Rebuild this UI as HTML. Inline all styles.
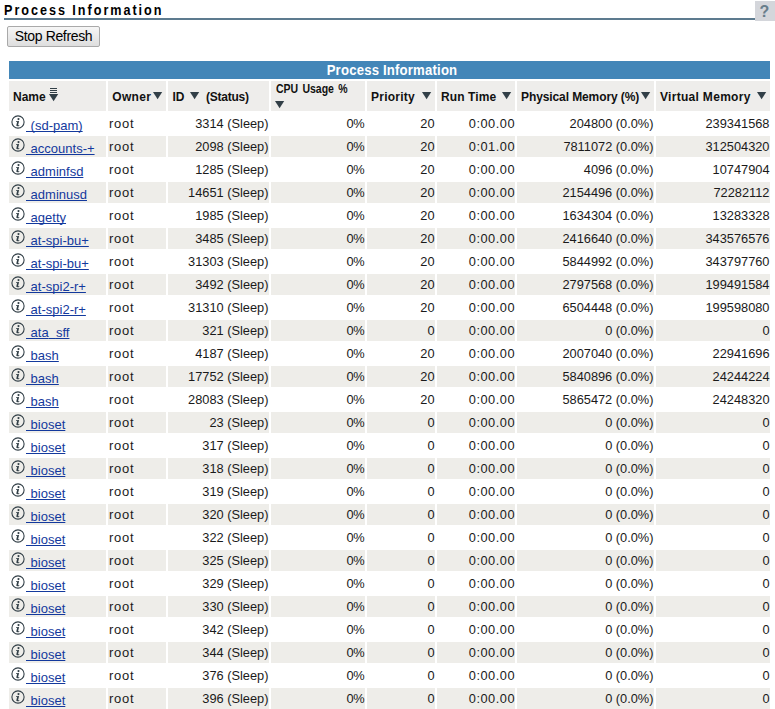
<!DOCTYPE html><html><head><meta charset="utf-8"><title>Process Information</title><style>
*{margin:0;padding:0;box-sizing:border-box}
html,body{width:775px;height:709px;overflow:hidden;background:#fff;position:relative;font-family:"Liberation Sans",sans-serif}
.a{position:absolute;white-space:nowrap}
.title{left:4px;top:0;font-size:14px;font-weight:bold;letter-spacing:2.2px;color:#000;line-height:20px;transform:scaleX(0.9);transform-origin:0 0}
.rule{left:4px;top:18px;width:751px;height:2px;background:#5d7b8f}
.help{left:755px;top:1px;width:20px;height:20px;background:#d4d6db}
.q{left:759.6px;top:1.5px;color:#687e8c;font-weight:bold;font-size:16px;line-height:20px}
.btn{left:7px;top:26px;width:93px;height:21px;border:1px solid #a9a9a9;border-radius:2px;background:linear-gradient(#f6f6f6,#dedede);font-size:14px;letter-spacing:-0.35px;line-height:18px;text-align:center;color:#000}
.cap{left:9px;top:61px;width:761px;height:18px;background:#4386b8;color:#fff;font-weight:bold;font-size:14.3px;letter-spacing:0.2px;line-height:18px;text-align:center;padding-left:5px}
.capt{transform:scaleX(0.92)}
.h{top:81px;height:30px;background:#eeedeb}
.ht{font-weight:bold;font-size:12px;color:#111;line-height:14px}
.tri{width:0;height:0;border-left:4.5px solid transparent;border-right:4.5px solid transparent;border-top:7px solid #323f47}
.r{height:21px}
.g{background:#eeede9}
.t{font-size:12.8px;color:#1a1a1a;line-height:14px}
.lk{font-size:13px;color:#13399d;line-height:14px;text-decoration:underline;text-decoration-skip-ink:none;word-spacing:1px}
</style></head><body>
<div class="a title">Process Information</div>
<div class="a rule"></div>
<div class="a help"></div><div class="a q">?</div>
<div class="a btn">Stop Refresh</div>
<div class="a cap"><div class="capt">Process Information</div></div>
<div class="a h" style="left:9px;width:97px"></div>
<div class="a h" style="left:108px;width:58px"></div>
<div class="a h" style="left:168px;width:101px"></div>
<div class="a h" style="left:271px;width:94px"></div>
<div class="a h" style="left:367px;width:68px"></div>
<div class="a h" style="left:437px;width:78px"></div>
<div class="a h" style="left:517px;width:137px"></div>
<div class="a h" style="left:656px;width:114px"></div>
<div class="a ht" style="left:13px;top:89.84px;letter-spacing:0px">Name</div>
<div class="a" style="left:50px;top:88px;width:7px;height:1px;background:#323f47"></div>
<div class="a" style="left:50px;top:90px;width:7px;height:1px;background:#323f47"></div>
<div class="a" style="left:50px;top:92px;width:7px;height:1px;background:#323f47"></div>
<svg class="a" style="left:49px;top:94px" width="10" height="8" viewBox="0 0 10 8"><polygon points="0,0 9.2,0 4.6,7.3" fill="#323f47"/></svg>
<div class="a ht" style="left:112.3px;top:89.84px;letter-spacing:0.3px">Owner</div>
<svg class="a" style="left:153px;top:92px" width="10" height="8" viewBox="0 0 10 8"><polygon points="0,0 9.2,0 4.6,7.3" fill="#323f47"/></svg>
<div class="a ht" style="left:172.5px;top:89.84px;letter-spacing:0px">ID</div>
<svg class="a" style="left:190px;top:92px" width="10" height="8" viewBox="0 0 10 8"><polygon points="0,0 9.2,0 4.6,7.3" fill="#323f47"/></svg>
<div class="a ht" style="left:206px;top:89.84px;letter-spacing:-0.25px">(Status)</div>
<div class="a ht" style="left:275.5px;top:81.84px;letter-spacing:0px;word-spacing:1.5px;transform:scaleX(0.875);transform-origin:0 0">CPU Usage %</div>
<svg class="a" style="left:275px;top:101px" width="10" height="8" viewBox="0 0 10 8"><polygon points="0,0 9.2,0 4.6,7.3" fill="#323f47"/></svg>
<div class="a ht" style="left:371px;top:89.84px;letter-spacing:0.25px">Priority</div>
<svg class="a" style="left:422px;top:92px" width="10" height="8" viewBox="0 0 10 8"><polygon points="0,0 9.2,0 4.6,7.3" fill="#323f47"/></svg>
<div class="a ht" style="left:441px;top:89.84px;letter-spacing:0.1px">Run Time</div>
<svg class="a" style="left:502px;top:92px" width="10" height="8" viewBox="0 0 10 8"><polygon points="0,0 9.2,0 4.6,7.3" fill="#323f47"/></svg>
<div class="a ht" style="left:521px;top:89.84px;letter-spacing:-0.1px">Physical Memory (%)</div>
<svg class="a" style="left:641px;top:92px" width="10" height="8" viewBox="0 0 10 8"><polygon points="0,0 9.2,0 4.6,7.3" fill="#323f47"/></svg>
<div class="a ht" style="left:660px;top:89.84px;letter-spacing:0.3px">Virtual Memory</div>
<svg class="a" style="left:757px;top:92px" width="10" height="8" viewBox="0 0 10 8"><polygon points="0,0 9.2,0 4.6,7.3" fill="#323f47"/></svg>
<div class="a r" style="left:9px;top:113px;width:97px"></div>
<div class="a r" style="left:108px;top:113px;width:58px"></div>
<div class="a r" style="left:168px;top:113px;width:101px"></div>
<div class="a r" style="left:271px;top:113px;width:94px"></div>
<div class="a r" style="left:367px;top:113px;width:68px"></div>
<div class="a r" style="left:437px;top:113px;width:78px"></div>
<div class="a r" style="left:517px;top:113px;width:137px"></div>
<div class="a r" style="left:656px;top:113px;width:114px"></div>
<svg class="a" style="left:11px;top:115px" width="14" height="14" viewBox="0 0 14 14"><circle cx="7" cy="7" r="6.1" fill="none" stroke="#323f47" stroke-width="1.1"/><circle cx="7.5" cy="4.1" r="1.05" fill="#323f47"/><path d="M5.1 6.2 L8.1 6.0 L7.1 10.0 Q7.0 10.4 7.6 10.3 L8.4 10.1 L8.1 10.9 Q7.0 11.3 5.8 11.1 Q5.1 10.9 5.4 10.0 L6.1 7.1 L5.0 7.1 Z" fill="#323f47"/></svg>
<div class="a lk" style="left:26px;top:118.67px">&nbsp;(sd-pam)</div>
<div class="a t" style="left:109px;top:116.67px;font-size:13px;letter-spacing:0.7px">root</div>
<div class="a t" style="right:506.50px;top:116.67px;letter-spacing:0px">3314 (Sleep)</div>
<div class="a t" style="right:411.10px;top:116.67px;letter-spacing:-0.6px">0%</div>
<div class="a t" style="right:340.50px;top:116.67px;letter-spacing:0px">20</div>
<div class="a t" style="right:260.00px;top:116.67px;letter-spacing:0.5px">0:00.00</div>
<div class="a t" style="right:121.50px;top:116.67px;letter-spacing:0px">204800 (0.0%)</div>
<div class="a t" style="right:5.50px;top:116.67px;letter-spacing:0px">239341568</div>
<div class="a r g" style="left:9px;top:136px;width:97px"></div>
<div class="a r g" style="left:108px;top:136px;width:58px"></div>
<div class="a r g" style="left:168px;top:136px;width:101px"></div>
<div class="a r g" style="left:271px;top:136px;width:94px"></div>
<div class="a r g" style="left:367px;top:136px;width:68px"></div>
<div class="a r g" style="left:437px;top:136px;width:78px"></div>
<div class="a r g" style="left:517px;top:136px;width:137px"></div>
<div class="a r g" style="left:656px;top:136px;width:114px"></div>
<svg class="a" style="left:11px;top:138px" width="14" height="14" viewBox="0 0 14 14"><circle cx="7" cy="7" r="6.1" fill="none" stroke="#323f47" stroke-width="1.1"/><circle cx="7.5" cy="4.1" r="1.05" fill="#323f47"/><path d="M5.1 6.2 L8.1 6.0 L7.1 10.0 Q7.0 10.4 7.6 10.3 L8.4 10.1 L8.1 10.9 Q7.0 11.3 5.8 11.1 Q5.1 10.9 5.4 10.0 L6.1 7.1 L5.0 7.1 Z" fill="#323f47"/></svg>
<div class="a lk" style="left:26px;top:141.67px">&nbsp;accounts-+</div>
<div class="a t" style="left:109px;top:139.67px;font-size:13px;letter-spacing:0.7px">root</div>
<div class="a t" style="right:506.50px;top:139.67px;letter-spacing:0px">2098 (Sleep)</div>
<div class="a t" style="right:411.10px;top:139.67px;letter-spacing:-0.6px">0%</div>
<div class="a t" style="right:340.50px;top:139.67px;letter-spacing:0px">20</div>
<div class="a t" style="right:260.00px;top:139.67px;letter-spacing:0.5px">0:01.00</div>
<div class="a t" style="right:121.50px;top:139.67px;letter-spacing:0px">7811072 (0.0%)</div>
<div class="a t" style="right:5.50px;top:139.67px;letter-spacing:0px">312504320</div>
<div class="a r" style="left:9px;top:159px;width:97px"></div>
<div class="a r" style="left:108px;top:159px;width:58px"></div>
<div class="a r" style="left:168px;top:159px;width:101px"></div>
<div class="a r" style="left:271px;top:159px;width:94px"></div>
<div class="a r" style="left:367px;top:159px;width:68px"></div>
<div class="a r" style="left:437px;top:159px;width:78px"></div>
<div class="a r" style="left:517px;top:159px;width:137px"></div>
<div class="a r" style="left:656px;top:159px;width:114px"></div>
<svg class="a" style="left:11px;top:161px" width="14" height="14" viewBox="0 0 14 14"><circle cx="7" cy="7" r="6.1" fill="none" stroke="#323f47" stroke-width="1.1"/><circle cx="7.5" cy="4.1" r="1.05" fill="#323f47"/><path d="M5.1 6.2 L8.1 6.0 L7.1 10.0 Q7.0 10.4 7.6 10.3 L8.4 10.1 L8.1 10.9 Q7.0 11.3 5.8 11.1 Q5.1 10.9 5.4 10.0 L6.1 7.1 L5.0 7.1 Z" fill="#323f47"/></svg>
<div class="a lk" style="left:26px;top:164.67px">&nbsp;adminfsd</div>
<div class="a t" style="left:109px;top:162.67px;font-size:13px;letter-spacing:0.7px">root</div>
<div class="a t" style="right:506.50px;top:162.67px;letter-spacing:0px">1285 (Sleep)</div>
<div class="a t" style="right:411.10px;top:162.67px;letter-spacing:-0.6px">0%</div>
<div class="a t" style="right:340.50px;top:162.67px;letter-spacing:0px">20</div>
<div class="a t" style="right:260.00px;top:162.67px;letter-spacing:0.5px">0:00.00</div>
<div class="a t" style="right:121.50px;top:162.67px;letter-spacing:0px">4096 (0.0%)</div>
<div class="a t" style="right:5.50px;top:162.67px;letter-spacing:0px">10747904</div>
<div class="a r g" style="left:9px;top:182px;width:97px"></div>
<div class="a r g" style="left:108px;top:182px;width:58px"></div>
<div class="a r g" style="left:168px;top:182px;width:101px"></div>
<div class="a r g" style="left:271px;top:182px;width:94px"></div>
<div class="a r g" style="left:367px;top:182px;width:68px"></div>
<div class="a r g" style="left:437px;top:182px;width:78px"></div>
<div class="a r g" style="left:517px;top:182px;width:137px"></div>
<div class="a r g" style="left:656px;top:182px;width:114px"></div>
<svg class="a" style="left:11px;top:184px" width="14" height="14" viewBox="0 0 14 14"><circle cx="7" cy="7" r="6.1" fill="none" stroke="#323f47" stroke-width="1.1"/><circle cx="7.5" cy="4.1" r="1.05" fill="#323f47"/><path d="M5.1 6.2 L8.1 6.0 L7.1 10.0 Q7.0 10.4 7.6 10.3 L8.4 10.1 L8.1 10.9 Q7.0 11.3 5.8 11.1 Q5.1 10.9 5.4 10.0 L6.1 7.1 L5.0 7.1 Z" fill="#323f47"/></svg>
<div class="a lk" style="left:26px;top:187.67px">&nbsp;adminusd</div>
<div class="a t" style="left:109px;top:185.67px;font-size:13px;letter-spacing:0.7px">root</div>
<div class="a t" style="right:506.50px;top:185.67px;letter-spacing:0px">14651 (Sleep)</div>
<div class="a t" style="right:411.10px;top:185.67px;letter-spacing:-0.6px">0%</div>
<div class="a t" style="right:340.50px;top:185.67px;letter-spacing:0px">20</div>
<div class="a t" style="right:260.00px;top:185.67px;letter-spacing:0.5px">0:00.00</div>
<div class="a t" style="right:121.50px;top:185.67px;letter-spacing:0px">2154496 (0.0%)</div>
<div class="a t" style="right:5.50px;top:185.67px;letter-spacing:0px">72282112</div>
<div class="a r" style="left:9px;top:205px;width:97px"></div>
<div class="a r" style="left:108px;top:205px;width:58px"></div>
<div class="a r" style="left:168px;top:205px;width:101px"></div>
<div class="a r" style="left:271px;top:205px;width:94px"></div>
<div class="a r" style="left:367px;top:205px;width:68px"></div>
<div class="a r" style="left:437px;top:205px;width:78px"></div>
<div class="a r" style="left:517px;top:205px;width:137px"></div>
<div class="a r" style="left:656px;top:205px;width:114px"></div>
<svg class="a" style="left:11px;top:207px" width="14" height="14" viewBox="0 0 14 14"><circle cx="7" cy="7" r="6.1" fill="none" stroke="#323f47" stroke-width="1.1"/><circle cx="7.5" cy="4.1" r="1.05" fill="#323f47"/><path d="M5.1 6.2 L8.1 6.0 L7.1 10.0 Q7.0 10.4 7.6 10.3 L8.4 10.1 L8.1 10.9 Q7.0 11.3 5.8 11.1 Q5.1 10.9 5.4 10.0 L6.1 7.1 L5.0 7.1 Z" fill="#323f47"/></svg>
<div class="a lk" style="left:26px;top:210.67px">&nbsp;agetty</div>
<div class="a t" style="left:109px;top:208.67px;font-size:13px;letter-spacing:0.7px">root</div>
<div class="a t" style="right:506.50px;top:208.67px;letter-spacing:0px">1985 (Sleep)</div>
<div class="a t" style="right:411.10px;top:208.67px;letter-spacing:-0.6px">0%</div>
<div class="a t" style="right:340.50px;top:208.67px;letter-spacing:0px">20</div>
<div class="a t" style="right:260.00px;top:208.67px;letter-spacing:0.5px">0:00.00</div>
<div class="a t" style="right:121.50px;top:208.67px;letter-spacing:0px">1634304 (0.0%)</div>
<div class="a t" style="right:5.50px;top:208.67px;letter-spacing:0px">13283328</div>
<div class="a r g" style="left:9px;top:228px;width:97px"></div>
<div class="a r g" style="left:108px;top:228px;width:58px"></div>
<div class="a r g" style="left:168px;top:228px;width:101px"></div>
<div class="a r g" style="left:271px;top:228px;width:94px"></div>
<div class="a r g" style="left:367px;top:228px;width:68px"></div>
<div class="a r g" style="left:437px;top:228px;width:78px"></div>
<div class="a r g" style="left:517px;top:228px;width:137px"></div>
<div class="a r g" style="left:656px;top:228px;width:114px"></div>
<svg class="a" style="left:11px;top:230px" width="14" height="14" viewBox="0 0 14 14"><circle cx="7" cy="7" r="6.1" fill="none" stroke="#323f47" stroke-width="1.1"/><circle cx="7.5" cy="4.1" r="1.05" fill="#323f47"/><path d="M5.1 6.2 L8.1 6.0 L7.1 10.0 Q7.0 10.4 7.6 10.3 L8.4 10.1 L8.1 10.9 Q7.0 11.3 5.8 11.1 Q5.1 10.9 5.4 10.0 L6.1 7.1 L5.0 7.1 Z" fill="#323f47"/></svg>
<div class="a lk" style="left:26px;top:233.67px">&nbsp;at-spi-bu+</div>
<div class="a t" style="left:109px;top:231.67px;font-size:13px;letter-spacing:0.7px">root</div>
<div class="a t" style="right:506.50px;top:231.67px;letter-spacing:0px">3485 (Sleep)</div>
<div class="a t" style="right:411.10px;top:231.67px;letter-spacing:-0.6px">0%</div>
<div class="a t" style="right:340.50px;top:231.67px;letter-spacing:0px">20</div>
<div class="a t" style="right:260.00px;top:231.67px;letter-spacing:0.5px">0:00.00</div>
<div class="a t" style="right:121.50px;top:231.67px;letter-spacing:0px">2416640 (0.0%)</div>
<div class="a t" style="right:5.50px;top:231.67px;letter-spacing:0px">343576576</div>
<div class="a r" style="left:9px;top:251px;width:97px"></div>
<div class="a r" style="left:108px;top:251px;width:58px"></div>
<div class="a r" style="left:168px;top:251px;width:101px"></div>
<div class="a r" style="left:271px;top:251px;width:94px"></div>
<div class="a r" style="left:367px;top:251px;width:68px"></div>
<div class="a r" style="left:437px;top:251px;width:78px"></div>
<div class="a r" style="left:517px;top:251px;width:137px"></div>
<div class="a r" style="left:656px;top:251px;width:114px"></div>
<svg class="a" style="left:11px;top:253px" width="14" height="14" viewBox="0 0 14 14"><circle cx="7" cy="7" r="6.1" fill="none" stroke="#323f47" stroke-width="1.1"/><circle cx="7.5" cy="4.1" r="1.05" fill="#323f47"/><path d="M5.1 6.2 L8.1 6.0 L7.1 10.0 Q7.0 10.4 7.6 10.3 L8.4 10.1 L8.1 10.9 Q7.0 11.3 5.8 11.1 Q5.1 10.9 5.4 10.0 L6.1 7.1 L5.0 7.1 Z" fill="#323f47"/></svg>
<div class="a lk" style="left:26px;top:256.67px">&nbsp;at-spi-bu+</div>
<div class="a t" style="left:109px;top:254.67px;font-size:13px;letter-spacing:0.7px">root</div>
<div class="a t" style="right:506.50px;top:254.67px;letter-spacing:0px">31303 (Sleep)</div>
<div class="a t" style="right:411.10px;top:254.67px;letter-spacing:-0.6px">0%</div>
<div class="a t" style="right:340.50px;top:254.67px;letter-spacing:0px">20</div>
<div class="a t" style="right:260.00px;top:254.67px;letter-spacing:0.5px">0:00.00</div>
<div class="a t" style="right:121.50px;top:254.67px;letter-spacing:0px">5844992 (0.0%)</div>
<div class="a t" style="right:5.50px;top:254.67px;letter-spacing:0px">343797760</div>
<div class="a r g" style="left:9px;top:274px;width:97px"></div>
<div class="a r g" style="left:108px;top:274px;width:58px"></div>
<div class="a r g" style="left:168px;top:274px;width:101px"></div>
<div class="a r g" style="left:271px;top:274px;width:94px"></div>
<div class="a r g" style="left:367px;top:274px;width:68px"></div>
<div class="a r g" style="left:437px;top:274px;width:78px"></div>
<div class="a r g" style="left:517px;top:274px;width:137px"></div>
<div class="a r g" style="left:656px;top:274px;width:114px"></div>
<svg class="a" style="left:11px;top:276px" width="14" height="14" viewBox="0 0 14 14"><circle cx="7" cy="7" r="6.1" fill="none" stroke="#323f47" stroke-width="1.1"/><circle cx="7.5" cy="4.1" r="1.05" fill="#323f47"/><path d="M5.1 6.2 L8.1 6.0 L7.1 10.0 Q7.0 10.4 7.6 10.3 L8.4 10.1 L8.1 10.9 Q7.0 11.3 5.8 11.1 Q5.1 10.9 5.4 10.0 L6.1 7.1 L5.0 7.1 Z" fill="#323f47"/></svg>
<div class="a lk" style="left:26px;top:279.67px">&nbsp;at-spi2-r+</div>
<div class="a t" style="left:109px;top:277.67px;font-size:13px;letter-spacing:0.7px">root</div>
<div class="a t" style="right:506.50px;top:277.67px;letter-spacing:0px">3492 (Sleep)</div>
<div class="a t" style="right:411.10px;top:277.67px;letter-spacing:-0.6px">0%</div>
<div class="a t" style="right:340.50px;top:277.67px;letter-spacing:0px">20</div>
<div class="a t" style="right:260.00px;top:277.67px;letter-spacing:0.5px">0:00.00</div>
<div class="a t" style="right:121.50px;top:277.67px;letter-spacing:0px">2797568 (0.0%)</div>
<div class="a t" style="right:5.50px;top:277.67px;letter-spacing:0px">199491584</div>
<div class="a r" style="left:9px;top:297px;width:97px"></div>
<div class="a r" style="left:108px;top:297px;width:58px"></div>
<div class="a r" style="left:168px;top:297px;width:101px"></div>
<div class="a r" style="left:271px;top:297px;width:94px"></div>
<div class="a r" style="left:367px;top:297px;width:68px"></div>
<div class="a r" style="left:437px;top:297px;width:78px"></div>
<div class="a r" style="left:517px;top:297px;width:137px"></div>
<div class="a r" style="left:656px;top:297px;width:114px"></div>
<svg class="a" style="left:11px;top:299px" width="14" height="14" viewBox="0 0 14 14"><circle cx="7" cy="7" r="6.1" fill="none" stroke="#323f47" stroke-width="1.1"/><circle cx="7.5" cy="4.1" r="1.05" fill="#323f47"/><path d="M5.1 6.2 L8.1 6.0 L7.1 10.0 Q7.0 10.4 7.6 10.3 L8.4 10.1 L8.1 10.9 Q7.0 11.3 5.8 11.1 Q5.1 10.9 5.4 10.0 L6.1 7.1 L5.0 7.1 Z" fill="#323f47"/></svg>
<div class="a lk" style="left:26px;top:302.67px">&nbsp;at-spi2-r+</div>
<div class="a t" style="left:109px;top:300.67px;font-size:13px;letter-spacing:0.7px">root</div>
<div class="a t" style="right:506.50px;top:300.67px;letter-spacing:0px">31310 (Sleep)</div>
<div class="a t" style="right:411.10px;top:300.67px;letter-spacing:-0.6px">0%</div>
<div class="a t" style="right:340.50px;top:300.67px;letter-spacing:0px">20</div>
<div class="a t" style="right:260.00px;top:300.67px;letter-spacing:0.5px">0:00.00</div>
<div class="a t" style="right:121.50px;top:300.67px;letter-spacing:0px">6504448 (0.0%)</div>
<div class="a t" style="right:5.50px;top:300.67px;letter-spacing:0px">199598080</div>
<div class="a r g" style="left:9px;top:320px;width:97px"></div>
<div class="a r g" style="left:108px;top:320px;width:58px"></div>
<div class="a r g" style="left:168px;top:320px;width:101px"></div>
<div class="a r g" style="left:271px;top:320px;width:94px"></div>
<div class="a r g" style="left:367px;top:320px;width:68px"></div>
<div class="a r g" style="left:437px;top:320px;width:78px"></div>
<div class="a r g" style="left:517px;top:320px;width:137px"></div>
<div class="a r g" style="left:656px;top:320px;width:114px"></div>
<svg class="a" style="left:11px;top:322px" width="14" height="14" viewBox="0 0 14 14"><circle cx="7" cy="7" r="6.1" fill="none" stroke="#323f47" stroke-width="1.1"/><circle cx="7.5" cy="4.1" r="1.05" fill="#323f47"/><path d="M5.1 6.2 L8.1 6.0 L7.1 10.0 Q7.0 10.4 7.6 10.3 L8.4 10.1 L8.1 10.9 Q7.0 11.3 5.8 11.1 Q5.1 10.9 5.4 10.0 L6.1 7.1 L5.0 7.1 Z" fill="#323f47"/></svg>
<div class="a lk" style="left:26px;top:325.67px">&nbsp;ata<span style=color:transparent>_</span>sff</div>
<div class="a t" style="left:109px;top:323.67px;font-size:13px;letter-spacing:0.7px">root</div>
<div class="a t" style="right:506.50px;top:323.67px;letter-spacing:0px">321 (Sleep)</div>
<div class="a t" style="right:411.10px;top:323.67px;letter-spacing:-0.6px">0%</div>
<div class="a t" style="right:340.50px;top:323.67px;letter-spacing:0px">0</div>
<div class="a t" style="right:260.00px;top:323.67px;letter-spacing:0.5px">0:00.00</div>
<div class="a t" style="right:121.50px;top:323.67px;letter-spacing:0px">0 (0.0%)</div>
<div class="a t" style="right:5.50px;top:323.67px;letter-spacing:0px">0</div>
<div class="a r" style="left:9px;top:343px;width:97px"></div>
<div class="a r" style="left:108px;top:343px;width:58px"></div>
<div class="a r" style="left:168px;top:343px;width:101px"></div>
<div class="a r" style="left:271px;top:343px;width:94px"></div>
<div class="a r" style="left:367px;top:343px;width:68px"></div>
<div class="a r" style="left:437px;top:343px;width:78px"></div>
<div class="a r" style="left:517px;top:343px;width:137px"></div>
<div class="a r" style="left:656px;top:343px;width:114px"></div>
<svg class="a" style="left:11px;top:345px" width="14" height="14" viewBox="0 0 14 14"><circle cx="7" cy="7" r="6.1" fill="none" stroke="#323f47" stroke-width="1.1"/><circle cx="7.5" cy="4.1" r="1.05" fill="#323f47"/><path d="M5.1 6.2 L8.1 6.0 L7.1 10.0 Q7.0 10.4 7.6 10.3 L8.4 10.1 L8.1 10.9 Q7.0 11.3 5.8 11.1 Q5.1 10.9 5.4 10.0 L6.1 7.1 L5.0 7.1 Z" fill="#323f47"/></svg>
<div class="a lk" style="left:26px;top:348.67px">&nbsp;bash</div>
<div class="a t" style="left:109px;top:346.67px;font-size:13px;letter-spacing:0.7px">root</div>
<div class="a t" style="right:506.50px;top:346.67px;letter-spacing:0px">4187 (Sleep)</div>
<div class="a t" style="right:411.10px;top:346.67px;letter-spacing:-0.6px">0%</div>
<div class="a t" style="right:340.50px;top:346.67px;letter-spacing:0px">20</div>
<div class="a t" style="right:260.00px;top:346.67px;letter-spacing:0.5px">0:00.00</div>
<div class="a t" style="right:121.50px;top:346.67px;letter-spacing:0px">2007040 (0.0%)</div>
<div class="a t" style="right:5.50px;top:346.67px;letter-spacing:0px">22941696</div>
<div class="a r g" style="left:9px;top:366px;width:97px"></div>
<div class="a r g" style="left:108px;top:366px;width:58px"></div>
<div class="a r g" style="left:168px;top:366px;width:101px"></div>
<div class="a r g" style="left:271px;top:366px;width:94px"></div>
<div class="a r g" style="left:367px;top:366px;width:68px"></div>
<div class="a r g" style="left:437px;top:366px;width:78px"></div>
<div class="a r g" style="left:517px;top:366px;width:137px"></div>
<div class="a r g" style="left:656px;top:366px;width:114px"></div>
<svg class="a" style="left:11px;top:368px" width="14" height="14" viewBox="0 0 14 14"><circle cx="7" cy="7" r="6.1" fill="none" stroke="#323f47" stroke-width="1.1"/><circle cx="7.5" cy="4.1" r="1.05" fill="#323f47"/><path d="M5.1 6.2 L8.1 6.0 L7.1 10.0 Q7.0 10.4 7.6 10.3 L8.4 10.1 L8.1 10.9 Q7.0 11.3 5.8 11.1 Q5.1 10.9 5.4 10.0 L6.1 7.1 L5.0 7.1 Z" fill="#323f47"/></svg>
<div class="a lk" style="left:26px;top:371.67px">&nbsp;bash</div>
<div class="a t" style="left:109px;top:369.67px;font-size:13px;letter-spacing:0.7px">root</div>
<div class="a t" style="right:506.50px;top:369.67px;letter-spacing:0px">17752 (Sleep)</div>
<div class="a t" style="right:411.10px;top:369.67px;letter-spacing:-0.6px">0%</div>
<div class="a t" style="right:340.50px;top:369.67px;letter-spacing:0px">20</div>
<div class="a t" style="right:260.00px;top:369.67px;letter-spacing:0.5px">0:00.00</div>
<div class="a t" style="right:121.50px;top:369.67px;letter-spacing:0px">5840896 (0.0%)</div>
<div class="a t" style="right:5.50px;top:369.67px;letter-spacing:0px">24244224</div>
<div class="a r" style="left:9px;top:389px;width:97px"></div>
<div class="a r" style="left:108px;top:389px;width:58px"></div>
<div class="a r" style="left:168px;top:389px;width:101px"></div>
<div class="a r" style="left:271px;top:389px;width:94px"></div>
<div class="a r" style="left:367px;top:389px;width:68px"></div>
<div class="a r" style="left:437px;top:389px;width:78px"></div>
<div class="a r" style="left:517px;top:389px;width:137px"></div>
<div class="a r" style="left:656px;top:389px;width:114px"></div>
<svg class="a" style="left:11px;top:391px" width="14" height="14" viewBox="0 0 14 14"><circle cx="7" cy="7" r="6.1" fill="none" stroke="#323f47" stroke-width="1.1"/><circle cx="7.5" cy="4.1" r="1.05" fill="#323f47"/><path d="M5.1 6.2 L8.1 6.0 L7.1 10.0 Q7.0 10.4 7.6 10.3 L8.4 10.1 L8.1 10.9 Q7.0 11.3 5.8 11.1 Q5.1 10.9 5.4 10.0 L6.1 7.1 L5.0 7.1 Z" fill="#323f47"/></svg>
<div class="a lk" style="left:26px;top:394.67px">&nbsp;bash</div>
<div class="a t" style="left:109px;top:392.67px;font-size:13px;letter-spacing:0.7px">root</div>
<div class="a t" style="right:506.50px;top:392.67px;letter-spacing:0px">28083 (Sleep)</div>
<div class="a t" style="right:411.10px;top:392.67px;letter-spacing:-0.6px">0%</div>
<div class="a t" style="right:340.50px;top:392.67px;letter-spacing:0px">20</div>
<div class="a t" style="right:260.00px;top:392.67px;letter-spacing:0.5px">0:00.00</div>
<div class="a t" style="right:121.50px;top:392.67px;letter-spacing:0px">5865472 (0.0%)</div>
<div class="a t" style="right:5.50px;top:392.67px;letter-spacing:0px">24248320</div>
<div class="a r g" style="left:9px;top:412px;width:97px"></div>
<div class="a r g" style="left:108px;top:412px;width:58px"></div>
<div class="a r g" style="left:168px;top:412px;width:101px"></div>
<div class="a r g" style="left:271px;top:412px;width:94px"></div>
<div class="a r g" style="left:367px;top:412px;width:68px"></div>
<div class="a r g" style="left:437px;top:412px;width:78px"></div>
<div class="a r g" style="left:517px;top:412px;width:137px"></div>
<div class="a r g" style="left:656px;top:412px;width:114px"></div>
<svg class="a" style="left:11px;top:414px" width="14" height="14" viewBox="0 0 14 14"><circle cx="7" cy="7" r="6.1" fill="none" stroke="#323f47" stroke-width="1.1"/><circle cx="7.5" cy="4.1" r="1.05" fill="#323f47"/><path d="M5.1 6.2 L8.1 6.0 L7.1 10.0 Q7.0 10.4 7.6 10.3 L8.4 10.1 L8.1 10.9 Q7.0 11.3 5.8 11.1 Q5.1 10.9 5.4 10.0 L6.1 7.1 L5.0 7.1 Z" fill="#323f47"/></svg>
<div class="a lk" style="left:26px;top:417.67px">&nbsp;bioset</div>
<div class="a t" style="left:109px;top:415.67px;font-size:13px;letter-spacing:0.7px">root</div>
<div class="a t" style="right:506.50px;top:415.67px;letter-spacing:0px">23 (Sleep)</div>
<div class="a t" style="right:411.10px;top:415.67px;letter-spacing:-0.6px">0%</div>
<div class="a t" style="right:340.50px;top:415.67px;letter-spacing:0px">0</div>
<div class="a t" style="right:260.00px;top:415.67px;letter-spacing:0.5px">0:00.00</div>
<div class="a t" style="right:121.50px;top:415.67px;letter-spacing:0px">0 (0.0%)</div>
<div class="a t" style="right:5.50px;top:415.67px;letter-spacing:0px">0</div>
<div class="a r" style="left:9px;top:435px;width:97px"></div>
<div class="a r" style="left:108px;top:435px;width:58px"></div>
<div class="a r" style="left:168px;top:435px;width:101px"></div>
<div class="a r" style="left:271px;top:435px;width:94px"></div>
<div class="a r" style="left:367px;top:435px;width:68px"></div>
<div class="a r" style="left:437px;top:435px;width:78px"></div>
<div class="a r" style="left:517px;top:435px;width:137px"></div>
<div class="a r" style="left:656px;top:435px;width:114px"></div>
<svg class="a" style="left:11px;top:437px" width="14" height="14" viewBox="0 0 14 14"><circle cx="7" cy="7" r="6.1" fill="none" stroke="#323f47" stroke-width="1.1"/><circle cx="7.5" cy="4.1" r="1.05" fill="#323f47"/><path d="M5.1 6.2 L8.1 6.0 L7.1 10.0 Q7.0 10.4 7.6 10.3 L8.4 10.1 L8.1 10.9 Q7.0 11.3 5.8 11.1 Q5.1 10.9 5.4 10.0 L6.1 7.1 L5.0 7.1 Z" fill="#323f47"/></svg>
<div class="a lk" style="left:26px;top:440.67px">&nbsp;bioset</div>
<div class="a t" style="left:109px;top:438.67px;font-size:13px;letter-spacing:0.7px">root</div>
<div class="a t" style="right:506.50px;top:438.67px;letter-spacing:0px">317 (Sleep)</div>
<div class="a t" style="right:411.10px;top:438.67px;letter-spacing:-0.6px">0%</div>
<div class="a t" style="right:340.50px;top:438.67px;letter-spacing:0px">0</div>
<div class="a t" style="right:260.00px;top:438.67px;letter-spacing:0.5px">0:00.00</div>
<div class="a t" style="right:121.50px;top:438.67px;letter-spacing:0px">0 (0.0%)</div>
<div class="a t" style="right:5.50px;top:438.67px;letter-spacing:0px">0</div>
<div class="a r g" style="left:9px;top:458px;width:97px"></div>
<div class="a r g" style="left:108px;top:458px;width:58px"></div>
<div class="a r g" style="left:168px;top:458px;width:101px"></div>
<div class="a r g" style="left:271px;top:458px;width:94px"></div>
<div class="a r g" style="left:367px;top:458px;width:68px"></div>
<div class="a r g" style="left:437px;top:458px;width:78px"></div>
<div class="a r g" style="left:517px;top:458px;width:137px"></div>
<div class="a r g" style="left:656px;top:458px;width:114px"></div>
<svg class="a" style="left:11px;top:460px" width="14" height="14" viewBox="0 0 14 14"><circle cx="7" cy="7" r="6.1" fill="none" stroke="#323f47" stroke-width="1.1"/><circle cx="7.5" cy="4.1" r="1.05" fill="#323f47"/><path d="M5.1 6.2 L8.1 6.0 L7.1 10.0 Q7.0 10.4 7.6 10.3 L8.4 10.1 L8.1 10.9 Q7.0 11.3 5.8 11.1 Q5.1 10.9 5.4 10.0 L6.1 7.1 L5.0 7.1 Z" fill="#323f47"/></svg>
<div class="a lk" style="left:26px;top:463.67px">&nbsp;bioset</div>
<div class="a t" style="left:109px;top:461.67px;font-size:13px;letter-spacing:0.7px">root</div>
<div class="a t" style="right:506.50px;top:461.67px;letter-spacing:0px">318 (Sleep)</div>
<div class="a t" style="right:411.10px;top:461.67px;letter-spacing:-0.6px">0%</div>
<div class="a t" style="right:340.50px;top:461.67px;letter-spacing:0px">0</div>
<div class="a t" style="right:260.00px;top:461.67px;letter-spacing:0.5px">0:00.00</div>
<div class="a t" style="right:121.50px;top:461.67px;letter-spacing:0px">0 (0.0%)</div>
<div class="a t" style="right:5.50px;top:461.67px;letter-spacing:0px">0</div>
<div class="a r" style="left:9px;top:481px;width:97px"></div>
<div class="a r" style="left:108px;top:481px;width:58px"></div>
<div class="a r" style="left:168px;top:481px;width:101px"></div>
<div class="a r" style="left:271px;top:481px;width:94px"></div>
<div class="a r" style="left:367px;top:481px;width:68px"></div>
<div class="a r" style="left:437px;top:481px;width:78px"></div>
<div class="a r" style="left:517px;top:481px;width:137px"></div>
<div class="a r" style="left:656px;top:481px;width:114px"></div>
<svg class="a" style="left:11px;top:483px" width="14" height="14" viewBox="0 0 14 14"><circle cx="7" cy="7" r="6.1" fill="none" stroke="#323f47" stroke-width="1.1"/><circle cx="7.5" cy="4.1" r="1.05" fill="#323f47"/><path d="M5.1 6.2 L8.1 6.0 L7.1 10.0 Q7.0 10.4 7.6 10.3 L8.4 10.1 L8.1 10.9 Q7.0 11.3 5.8 11.1 Q5.1 10.9 5.4 10.0 L6.1 7.1 L5.0 7.1 Z" fill="#323f47"/></svg>
<div class="a lk" style="left:26px;top:486.67px">&nbsp;bioset</div>
<div class="a t" style="left:109px;top:484.67px;font-size:13px;letter-spacing:0.7px">root</div>
<div class="a t" style="right:506.50px;top:484.67px;letter-spacing:0px">319 (Sleep)</div>
<div class="a t" style="right:411.10px;top:484.67px;letter-spacing:-0.6px">0%</div>
<div class="a t" style="right:340.50px;top:484.67px;letter-spacing:0px">0</div>
<div class="a t" style="right:260.00px;top:484.67px;letter-spacing:0.5px">0:00.00</div>
<div class="a t" style="right:121.50px;top:484.67px;letter-spacing:0px">0 (0.0%)</div>
<div class="a t" style="right:5.50px;top:484.67px;letter-spacing:0px">0</div>
<div class="a r g" style="left:9px;top:504px;width:97px"></div>
<div class="a r g" style="left:108px;top:504px;width:58px"></div>
<div class="a r g" style="left:168px;top:504px;width:101px"></div>
<div class="a r g" style="left:271px;top:504px;width:94px"></div>
<div class="a r g" style="left:367px;top:504px;width:68px"></div>
<div class="a r g" style="left:437px;top:504px;width:78px"></div>
<div class="a r g" style="left:517px;top:504px;width:137px"></div>
<div class="a r g" style="left:656px;top:504px;width:114px"></div>
<svg class="a" style="left:11px;top:506px" width="14" height="14" viewBox="0 0 14 14"><circle cx="7" cy="7" r="6.1" fill="none" stroke="#323f47" stroke-width="1.1"/><circle cx="7.5" cy="4.1" r="1.05" fill="#323f47"/><path d="M5.1 6.2 L8.1 6.0 L7.1 10.0 Q7.0 10.4 7.6 10.3 L8.4 10.1 L8.1 10.9 Q7.0 11.3 5.8 11.1 Q5.1 10.9 5.4 10.0 L6.1 7.1 L5.0 7.1 Z" fill="#323f47"/></svg>
<div class="a lk" style="left:26px;top:509.67px">&nbsp;bioset</div>
<div class="a t" style="left:109px;top:507.67px;font-size:13px;letter-spacing:0.7px">root</div>
<div class="a t" style="right:506.50px;top:507.67px;letter-spacing:0px">320 (Sleep)</div>
<div class="a t" style="right:411.10px;top:507.67px;letter-spacing:-0.6px">0%</div>
<div class="a t" style="right:340.50px;top:507.67px;letter-spacing:0px">0</div>
<div class="a t" style="right:260.00px;top:507.67px;letter-spacing:0.5px">0:00.00</div>
<div class="a t" style="right:121.50px;top:507.67px;letter-spacing:0px">0 (0.0%)</div>
<div class="a t" style="right:5.50px;top:507.67px;letter-spacing:0px">0</div>
<div class="a r" style="left:9px;top:527px;width:97px"></div>
<div class="a r" style="left:108px;top:527px;width:58px"></div>
<div class="a r" style="left:168px;top:527px;width:101px"></div>
<div class="a r" style="left:271px;top:527px;width:94px"></div>
<div class="a r" style="left:367px;top:527px;width:68px"></div>
<div class="a r" style="left:437px;top:527px;width:78px"></div>
<div class="a r" style="left:517px;top:527px;width:137px"></div>
<div class="a r" style="left:656px;top:527px;width:114px"></div>
<svg class="a" style="left:11px;top:529px" width="14" height="14" viewBox="0 0 14 14"><circle cx="7" cy="7" r="6.1" fill="none" stroke="#323f47" stroke-width="1.1"/><circle cx="7.5" cy="4.1" r="1.05" fill="#323f47"/><path d="M5.1 6.2 L8.1 6.0 L7.1 10.0 Q7.0 10.4 7.6 10.3 L8.4 10.1 L8.1 10.9 Q7.0 11.3 5.8 11.1 Q5.1 10.9 5.4 10.0 L6.1 7.1 L5.0 7.1 Z" fill="#323f47"/></svg>
<div class="a lk" style="left:26px;top:532.67px">&nbsp;bioset</div>
<div class="a t" style="left:109px;top:530.67px;font-size:13px;letter-spacing:0.7px">root</div>
<div class="a t" style="right:506.50px;top:530.67px;letter-spacing:0px">322 (Sleep)</div>
<div class="a t" style="right:411.10px;top:530.67px;letter-spacing:-0.6px">0%</div>
<div class="a t" style="right:340.50px;top:530.67px;letter-spacing:0px">0</div>
<div class="a t" style="right:260.00px;top:530.67px;letter-spacing:0.5px">0:00.00</div>
<div class="a t" style="right:121.50px;top:530.67px;letter-spacing:0px">0 (0.0%)</div>
<div class="a t" style="right:5.50px;top:530.67px;letter-spacing:0px">0</div>
<div class="a r g" style="left:9px;top:550px;width:97px"></div>
<div class="a r g" style="left:108px;top:550px;width:58px"></div>
<div class="a r g" style="left:168px;top:550px;width:101px"></div>
<div class="a r g" style="left:271px;top:550px;width:94px"></div>
<div class="a r g" style="left:367px;top:550px;width:68px"></div>
<div class="a r g" style="left:437px;top:550px;width:78px"></div>
<div class="a r g" style="left:517px;top:550px;width:137px"></div>
<div class="a r g" style="left:656px;top:550px;width:114px"></div>
<svg class="a" style="left:11px;top:552px" width="14" height="14" viewBox="0 0 14 14"><circle cx="7" cy="7" r="6.1" fill="none" stroke="#323f47" stroke-width="1.1"/><circle cx="7.5" cy="4.1" r="1.05" fill="#323f47"/><path d="M5.1 6.2 L8.1 6.0 L7.1 10.0 Q7.0 10.4 7.6 10.3 L8.4 10.1 L8.1 10.9 Q7.0 11.3 5.8 11.1 Q5.1 10.9 5.4 10.0 L6.1 7.1 L5.0 7.1 Z" fill="#323f47"/></svg>
<div class="a lk" style="left:26px;top:555.67px">&nbsp;bioset</div>
<div class="a t" style="left:109px;top:553.67px;font-size:13px;letter-spacing:0.7px">root</div>
<div class="a t" style="right:506.50px;top:553.67px;letter-spacing:0px">325 (Sleep)</div>
<div class="a t" style="right:411.10px;top:553.67px;letter-spacing:-0.6px">0%</div>
<div class="a t" style="right:340.50px;top:553.67px;letter-spacing:0px">0</div>
<div class="a t" style="right:260.00px;top:553.67px;letter-spacing:0.5px">0:00.00</div>
<div class="a t" style="right:121.50px;top:553.67px;letter-spacing:0px">0 (0.0%)</div>
<div class="a t" style="right:5.50px;top:553.67px;letter-spacing:0px">0</div>
<div class="a r" style="left:9px;top:573px;width:97px"></div>
<div class="a r" style="left:108px;top:573px;width:58px"></div>
<div class="a r" style="left:168px;top:573px;width:101px"></div>
<div class="a r" style="left:271px;top:573px;width:94px"></div>
<div class="a r" style="left:367px;top:573px;width:68px"></div>
<div class="a r" style="left:437px;top:573px;width:78px"></div>
<div class="a r" style="left:517px;top:573px;width:137px"></div>
<div class="a r" style="left:656px;top:573px;width:114px"></div>
<svg class="a" style="left:11px;top:575px" width="14" height="14" viewBox="0 0 14 14"><circle cx="7" cy="7" r="6.1" fill="none" stroke="#323f47" stroke-width="1.1"/><circle cx="7.5" cy="4.1" r="1.05" fill="#323f47"/><path d="M5.1 6.2 L8.1 6.0 L7.1 10.0 Q7.0 10.4 7.6 10.3 L8.4 10.1 L8.1 10.9 Q7.0 11.3 5.8 11.1 Q5.1 10.9 5.4 10.0 L6.1 7.1 L5.0 7.1 Z" fill="#323f47"/></svg>
<div class="a lk" style="left:26px;top:578.67px">&nbsp;bioset</div>
<div class="a t" style="left:109px;top:576.67px;font-size:13px;letter-spacing:0.7px">root</div>
<div class="a t" style="right:506.50px;top:576.67px;letter-spacing:0px">329 (Sleep)</div>
<div class="a t" style="right:411.10px;top:576.67px;letter-spacing:-0.6px">0%</div>
<div class="a t" style="right:340.50px;top:576.67px;letter-spacing:0px">0</div>
<div class="a t" style="right:260.00px;top:576.67px;letter-spacing:0.5px">0:00.00</div>
<div class="a t" style="right:121.50px;top:576.67px;letter-spacing:0px">0 (0.0%)</div>
<div class="a t" style="right:5.50px;top:576.67px;letter-spacing:0px">0</div>
<div class="a r g" style="left:9px;top:596px;width:97px"></div>
<div class="a r g" style="left:108px;top:596px;width:58px"></div>
<div class="a r g" style="left:168px;top:596px;width:101px"></div>
<div class="a r g" style="left:271px;top:596px;width:94px"></div>
<div class="a r g" style="left:367px;top:596px;width:68px"></div>
<div class="a r g" style="left:437px;top:596px;width:78px"></div>
<div class="a r g" style="left:517px;top:596px;width:137px"></div>
<div class="a r g" style="left:656px;top:596px;width:114px"></div>
<svg class="a" style="left:11px;top:598px" width="14" height="14" viewBox="0 0 14 14"><circle cx="7" cy="7" r="6.1" fill="none" stroke="#323f47" stroke-width="1.1"/><circle cx="7.5" cy="4.1" r="1.05" fill="#323f47"/><path d="M5.1 6.2 L8.1 6.0 L7.1 10.0 Q7.0 10.4 7.6 10.3 L8.4 10.1 L8.1 10.9 Q7.0 11.3 5.8 11.1 Q5.1 10.9 5.4 10.0 L6.1 7.1 L5.0 7.1 Z" fill="#323f47"/></svg>
<div class="a lk" style="left:26px;top:601.67px">&nbsp;bioset</div>
<div class="a t" style="left:109px;top:599.67px;font-size:13px;letter-spacing:0.7px">root</div>
<div class="a t" style="right:506.50px;top:599.67px;letter-spacing:0px">330 (Sleep)</div>
<div class="a t" style="right:411.10px;top:599.67px;letter-spacing:-0.6px">0%</div>
<div class="a t" style="right:340.50px;top:599.67px;letter-spacing:0px">0</div>
<div class="a t" style="right:260.00px;top:599.67px;letter-spacing:0.5px">0:00.00</div>
<div class="a t" style="right:121.50px;top:599.67px;letter-spacing:0px">0 (0.0%)</div>
<div class="a t" style="right:5.50px;top:599.67px;letter-spacing:0px">0</div>
<div class="a r" style="left:9px;top:619px;width:97px"></div>
<div class="a r" style="left:108px;top:619px;width:58px"></div>
<div class="a r" style="left:168px;top:619px;width:101px"></div>
<div class="a r" style="left:271px;top:619px;width:94px"></div>
<div class="a r" style="left:367px;top:619px;width:68px"></div>
<div class="a r" style="left:437px;top:619px;width:78px"></div>
<div class="a r" style="left:517px;top:619px;width:137px"></div>
<div class="a r" style="left:656px;top:619px;width:114px"></div>
<svg class="a" style="left:11px;top:621px" width="14" height="14" viewBox="0 0 14 14"><circle cx="7" cy="7" r="6.1" fill="none" stroke="#323f47" stroke-width="1.1"/><circle cx="7.5" cy="4.1" r="1.05" fill="#323f47"/><path d="M5.1 6.2 L8.1 6.0 L7.1 10.0 Q7.0 10.4 7.6 10.3 L8.4 10.1 L8.1 10.9 Q7.0 11.3 5.8 11.1 Q5.1 10.9 5.4 10.0 L6.1 7.1 L5.0 7.1 Z" fill="#323f47"/></svg>
<div class="a lk" style="left:26px;top:624.67px">&nbsp;bioset</div>
<div class="a t" style="left:109px;top:622.67px;font-size:13px;letter-spacing:0.7px">root</div>
<div class="a t" style="right:506.50px;top:622.67px;letter-spacing:0px">342 (Sleep)</div>
<div class="a t" style="right:411.10px;top:622.67px;letter-spacing:-0.6px">0%</div>
<div class="a t" style="right:340.50px;top:622.67px;letter-spacing:0px">0</div>
<div class="a t" style="right:260.00px;top:622.67px;letter-spacing:0.5px">0:00.00</div>
<div class="a t" style="right:121.50px;top:622.67px;letter-spacing:0px">0 (0.0%)</div>
<div class="a t" style="right:5.50px;top:622.67px;letter-spacing:0px">0</div>
<div class="a r g" style="left:9px;top:642px;width:97px"></div>
<div class="a r g" style="left:108px;top:642px;width:58px"></div>
<div class="a r g" style="left:168px;top:642px;width:101px"></div>
<div class="a r g" style="left:271px;top:642px;width:94px"></div>
<div class="a r g" style="left:367px;top:642px;width:68px"></div>
<div class="a r g" style="left:437px;top:642px;width:78px"></div>
<div class="a r g" style="left:517px;top:642px;width:137px"></div>
<div class="a r g" style="left:656px;top:642px;width:114px"></div>
<svg class="a" style="left:11px;top:644px" width="14" height="14" viewBox="0 0 14 14"><circle cx="7" cy="7" r="6.1" fill="none" stroke="#323f47" stroke-width="1.1"/><circle cx="7.5" cy="4.1" r="1.05" fill="#323f47"/><path d="M5.1 6.2 L8.1 6.0 L7.1 10.0 Q7.0 10.4 7.6 10.3 L8.4 10.1 L8.1 10.9 Q7.0 11.3 5.8 11.1 Q5.1 10.9 5.4 10.0 L6.1 7.1 L5.0 7.1 Z" fill="#323f47"/></svg>
<div class="a lk" style="left:26px;top:647.67px">&nbsp;bioset</div>
<div class="a t" style="left:109px;top:645.67px;font-size:13px;letter-spacing:0.7px">root</div>
<div class="a t" style="right:506.50px;top:645.67px;letter-spacing:0px">344 (Sleep)</div>
<div class="a t" style="right:411.10px;top:645.67px;letter-spacing:-0.6px">0%</div>
<div class="a t" style="right:340.50px;top:645.67px;letter-spacing:0px">0</div>
<div class="a t" style="right:260.00px;top:645.67px;letter-spacing:0.5px">0:00.00</div>
<div class="a t" style="right:121.50px;top:645.67px;letter-spacing:0px">0 (0.0%)</div>
<div class="a t" style="right:5.50px;top:645.67px;letter-spacing:0px">0</div>
<div class="a r" style="left:9px;top:665px;width:97px"></div>
<div class="a r" style="left:108px;top:665px;width:58px"></div>
<div class="a r" style="left:168px;top:665px;width:101px"></div>
<div class="a r" style="left:271px;top:665px;width:94px"></div>
<div class="a r" style="left:367px;top:665px;width:68px"></div>
<div class="a r" style="left:437px;top:665px;width:78px"></div>
<div class="a r" style="left:517px;top:665px;width:137px"></div>
<div class="a r" style="left:656px;top:665px;width:114px"></div>
<svg class="a" style="left:11px;top:667px" width="14" height="14" viewBox="0 0 14 14"><circle cx="7" cy="7" r="6.1" fill="none" stroke="#323f47" stroke-width="1.1"/><circle cx="7.5" cy="4.1" r="1.05" fill="#323f47"/><path d="M5.1 6.2 L8.1 6.0 L7.1 10.0 Q7.0 10.4 7.6 10.3 L8.4 10.1 L8.1 10.9 Q7.0 11.3 5.8 11.1 Q5.1 10.9 5.4 10.0 L6.1 7.1 L5.0 7.1 Z" fill="#323f47"/></svg>
<div class="a lk" style="left:26px;top:670.67px">&nbsp;bioset</div>
<div class="a t" style="left:109px;top:668.67px;font-size:13px;letter-spacing:0.7px">root</div>
<div class="a t" style="right:506.50px;top:668.67px;letter-spacing:0px">376 (Sleep)</div>
<div class="a t" style="right:411.10px;top:668.67px;letter-spacing:-0.6px">0%</div>
<div class="a t" style="right:340.50px;top:668.67px;letter-spacing:0px">0</div>
<div class="a t" style="right:260.00px;top:668.67px;letter-spacing:0.5px">0:00.00</div>
<div class="a t" style="right:121.50px;top:668.67px;letter-spacing:0px">0 (0.0%)</div>
<div class="a t" style="right:5.50px;top:668.67px;letter-spacing:0px">0</div>
<div class="a r g" style="left:9px;top:688px;width:97px"></div>
<div class="a r g" style="left:108px;top:688px;width:58px"></div>
<div class="a r g" style="left:168px;top:688px;width:101px"></div>
<div class="a r g" style="left:271px;top:688px;width:94px"></div>
<div class="a r g" style="left:367px;top:688px;width:68px"></div>
<div class="a r g" style="left:437px;top:688px;width:78px"></div>
<div class="a r g" style="left:517px;top:688px;width:137px"></div>
<div class="a r g" style="left:656px;top:688px;width:114px"></div>
<svg class="a" style="left:11px;top:690px" width="14" height="14" viewBox="0 0 14 14"><circle cx="7" cy="7" r="6.1" fill="none" stroke="#323f47" stroke-width="1.1"/><circle cx="7.5" cy="4.1" r="1.05" fill="#323f47"/><path d="M5.1 6.2 L8.1 6.0 L7.1 10.0 Q7.0 10.4 7.6 10.3 L8.4 10.1 L8.1 10.9 Q7.0 11.3 5.8 11.1 Q5.1 10.9 5.4 10.0 L6.1 7.1 L5.0 7.1 Z" fill="#323f47"/></svg>
<div class="a lk" style="left:26px;top:693.67px">&nbsp;bioset</div>
<div class="a t" style="left:109px;top:691.67px;font-size:13px;letter-spacing:0.7px">root</div>
<div class="a t" style="right:506.50px;top:691.67px;letter-spacing:0px">396 (Sleep)</div>
<div class="a t" style="right:411.10px;top:691.67px;letter-spacing:-0.6px">0%</div>
<div class="a t" style="right:340.50px;top:691.67px;letter-spacing:0px">0</div>
<div class="a t" style="right:260.00px;top:691.67px;letter-spacing:0.5px">0:00.00</div>
<div class="a t" style="right:121.50px;top:691.67px;letter-spacing:0px">0 (0.0%)</div>
<div class="a t" style="right:5.50px;top:691.67px;letter-spacing:0px">0</div>
</body></html>
